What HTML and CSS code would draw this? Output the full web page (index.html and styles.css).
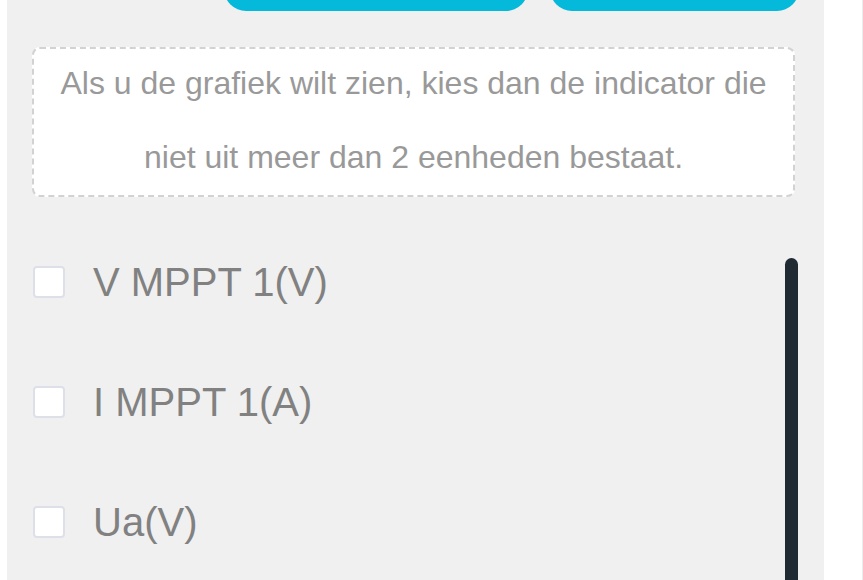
FILE: index.html
```html
<!DOCTYPE html>
<html lang="nl">
<head>
<meta charset="utf-8">
<title>Indicator</title>
<link rel="stylesheet" href="styles.css">
</head>
<body>
<div class="screen">
  <div class="gutter"></div>
  <main class="panel">
    <div class="btn-row">
      <button class="btn btn-wide"></button>
      <button class="btn btn-narrow"></button>
    </div>
    <div class="notice">
      <p class="notice-text">Als u de grafiek wilt zien, kies dan de indicator die<br>niet uit meer dan 2 eenheden bestaat.</p>
    </div>
    <ul class="options">
      <li class="option"><span class="check"></span><span class="label">V MPPT 1(V)</span></li>
      <li class="option"><span class="check"></span><span class="label">I MPPT 1(A)</span></li>
      <li class="option"><span class="check"></span><span class="label">Ua(V)</span></li>
    </ul>
    <div class="scroll-thumb"></div>
  </main>
  <div class="aside"></div>
</div>
</body>
</html>
```
FILE: styles.css
```css
* { box-sizing: border-box; }
html, body { margin: 0; padding: 0; background: #ffffff; }
body { font-family: "Liberation Sans", Arial, sans-serif; overflow: hidden; }

.screen {
  display: flex;
  width: 863px;
  height: 580px;
  overflow: hidden;
}
.gutter { width: 7px; flex: none; background: #ffffff; }
.panel {
  position: relative;
  width: 817px;
  flex: none;
  height: 580px;
  background: #f0f0f0;
  overflow: hidden;
}
.aside {
  flex: 1;
  background: #ffffff;
  border-right: 1px solid #ececec;
}

.btn-row {
  display: flex;
  gap: 22px;
  margin-left: 217px;
  margin-top: -33px;
  height: 44px;
}
.btn {
  border: none;
  padding: 0;
  height: 44px;
  border-radius: 22px;
  background: #04b9d9;
}
.btn-wide { width: 304px; }
.btn-narrow { width: 249px; }

.notice {
  margin: 36px 0 0 25px;
  width: 763px;
  height: 150px;
  border: 2px dashed #d2d2d2;
  border-radius: 8px;
  background: #ffffff;
}
.notice-text {
  margin: -3px 0 0 0;
  text-align: center;
  font-size: 32px;
  line-height: 74px;
  color: #999999;
}

.options {
  list-style: none;
  margin: 25px 0 0 0;
  padding: 0 0 0 26px;
}
.option {
  display: flex;
  align-items: center;
  height: 120px;
  gap: 28px;
}
.check {
  width: 32px;
  height: 32px;
  flex: none;
  border: 2px solid #dde0e8;
  border-radius: 4px;
  background: #ffffff;
}
.label {
  font-size: 40px;
  color: #818181;
  line-height: 1;
}

.scroll-thumb {
  position: absolute;
  left: 778px;
  top: 258px;
  width: 13px;
  height: 340px;
  border-radius: 7px;
  background: #1f2a33;
}
```
